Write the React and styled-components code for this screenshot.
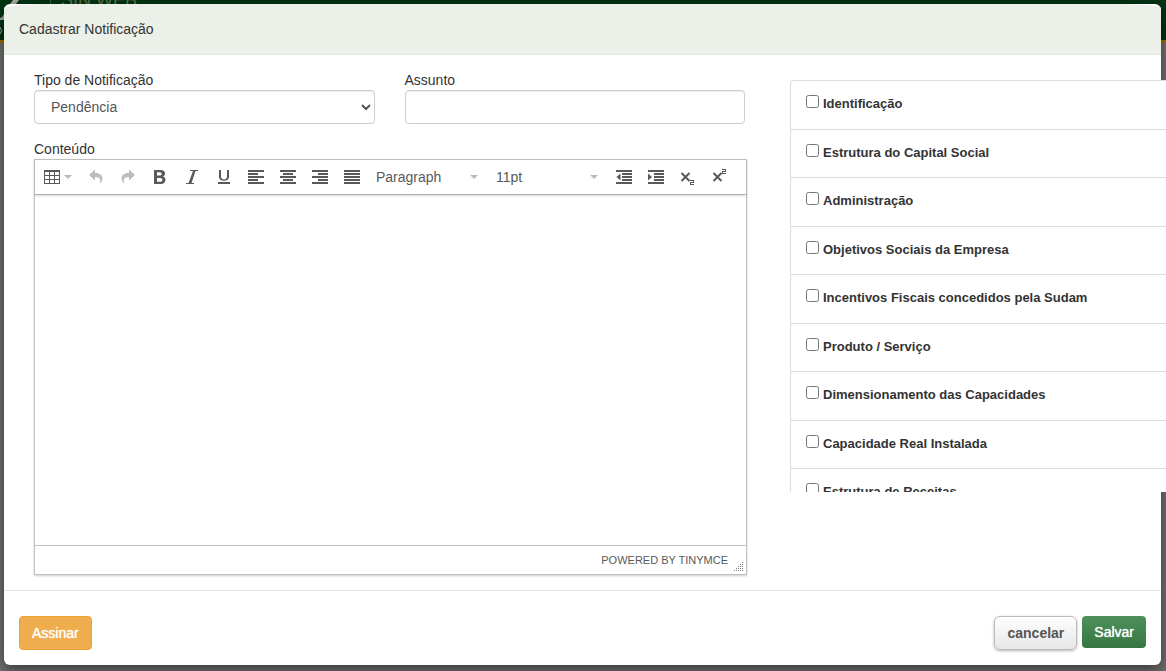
import React from "react";
import styled, { createGlobalStyle, css } from "styled-components";

const Global = createGlobalStyle`
  *, *::before, *::after { box-sizing: border-box; }
  html, body, #root { height: 100%; }
  body {
    margin: 0;
    overflow: hidden;
    background: #707070;
    color: #333;
    font: 14px/20px "Liberation Sans", Arial, sans-serif;
  }
  button, input, select { font: inherit; }
`;

const Page = styled.div`
  position: relative;
  height: 100%;
`;

const SiteHeader = styled.header`
  display: flex;
  height: 43px;
  overflow: hidden;
  background: #003413;
  border-bottom: 3px solid #a06c00;
`;

const SiteTitle = styled.span`
  margin: -9px 0 0 61px;
  color: #5d7548;
  font-size: 18px;
  line-height: 18px;
`;

const SiteLogo = styled.svg`
  position: absolute;
  left: 0;
  top: 0;
`;

const Modal = styled.form`
  position: absolute;
  inset: 4px 5px 6px 4px;
  display: flex;
  flex-direction: column;
  background: #fff;
  border-radius: 6px;
  box-shadow: 0 5px 15px rgba(0, 0, 0, 0.5);
`;

const ModalHeader = styled.div`
  padding: 15px;
  background: #ebf0e9;
  border-bottom: 1px solid #e5e5e5;
  border-radius: 50px 50px 0 0 / 4px 4px 0 0;
`;

const Title = styled.h4`
  margin: 0;
  font-size: 14px;
  font-weight: 400;
  line-height: 20px;
`;

const ModalBody = styled.div`
  flex: 1;
  display: grid;
  grid-template-columns: minmax(0, 1fr) 371px;
  column-gap: 45px;
  align-items: start;
  padding: 15px 0 0 30px;
`;

const Fields = styled.div`
  display: grid;
  grid-template-columns: 1fr 1fr;
  gap: 15px 30px;
`;

const Field = styled.div`
  display: flex;
  flex-direction: column;
  min-width: 0;
`;

const Label = styled.label`
  line-height: 20px;
`;

const control = css`
  width: 100%;
  height: 34px;
  color: #555;
  background: #fff;
  border: 1px solid #ccc;
  border-radius: 4px;
  box-shadow: inset 0 1px 1px rgba(0, 0, 0, 0.075);
`;

const Select = styled.select`
  ${control}
  padding: 6px 0 6px 12px;
`;

const TextInput = styled.input`
  ${control}
  padding: 6px 12px;
`;

const ContentField = styled(Field)`
  grid-column: 1 / -1;
  margin-right: -2px;
`;

const Editor = styled.div`
  border: 1px solid #c0c0c0;
  box-shadow: 0 1px 2px rgba(0, 0, 0, 0.2);
`;

const Toolbar = styled.div`
  display: flex;
  align-items: center;
  height: 35px;
  padding-left: 5px;
  border-bottom: 1px solid #b2b2b2;
  box-shadow: 0 1px 2px rgba(0, 0, 0, 0.15);
`;

const ToolButton = styled.button`
  display: flex;
  align-items: center;
  gap: 4px;
  width: ${(p) => p.$width || 32}px;
  height: 28px;
  padding: 0 4px;
  border: 0;
  background: none;
  color: #595959;
  opacity: ${(p) => (p.disabled ? 0.4 : 1)};
`;

const ListButton = styled(ToolButton)`
  width: 120px;
  padding-right: 14px;
`;

const ListLabel = styled.span`
  flex: 1;
  text-align: left;
`;

const Caret = styled.span`
  border: 4px solid transparent;
  border-top-color: #b5bcc2;
  border-bottom: 0;
`;

const EditArea = styled.div`
  height: 350px;
  outline: 0;
`;

const StatusBar = styled.div`
  display: flex;
  justify-content: flex-end;
  height: 29px;
  padding: 4px 2px 2px 0;
  border-top: 1px solid #c0c0c0;
  color: #595959;
  font-size: 11px;
`;

const Grip = styled.svg`
  align-self: flex-end;
  margin-left: 4px;
`;

const SectionScroll = styled.div`
  height: 412px;
  margin-top: 10px;
  margin-right: -5px;
  overflow: hidden;
  background: #fff;
  position: relative;
`;

const SectionList = styled.ul`
  display: grid;
  grid-auto-rows: 1fr;
  height: 437px;
  margin: 0;
  padding: 0;
  list-style: none;
  border-left: 1px solid #ddd;
  border-top-left-radius: 4px;
`;

const Section = styled.li`
  padding: 12px 15px;
  border-top: 1px solid #ddd;
  &:first-child { border-top-left-radius: 4px; }
`;

const SectionLabel = styled.label`
  display: flex;
  gap: 4px;
  font-size: 13px;
  font-weight: 700;
  line-height: 22px;
`;

const CheckBox = styled.input`
  width: 13px;
  height: 13px;
  margin: 2px 0 0;
`;

const ModalFooter = styled.div`
  display: flex;
  gap: 5px;
  padding: 25px 15px 15px;
  border-top: 1px solid #e5e5e5;
`;

const Button = styled.button`
  align-self: flex-start;
  height: 34px;
  padding: 0 12px;
  border: 1px solid transparent;
  border-radius: 4px;
`;

const SignButton = styled(Button)`
  margin-right: auto;
  color: #fff;
  background: #f0ad4e;
  border-color: #eea236;
  text-shadow: 0 0 1px #fff;
`;

const CancelButton = styled(Button)`
  color: #555;
  font-weight: 700;
  background: linear-gradient(#fff, #e6e6e6);
  border-color: #bbb;
  border-radius: 6px;
  box-shadow: 0 1px 3px rgba(0, 0, 0, 0.3);
`;

const SaveButton = styled(Button)`
  height: 32px;
  border: 0;
  color: #fff;
  background: linear-gradient(#4f915d, #357643);
  text-shadow: 0 0 1px #fff;
`;

const Icon = ({ children }) => (
  <svg width="16" height="16" viewBox="0 0 16 16" fill="currentColor" aria-hidden="true">
    {children}
  </svg>
);

const Lines = ({ d }) => (
  <Icon>
    <path d={d} shapeRendering="crispEdges" />
  </Icon>
);

const undoPath = "M7 0.500 1 6l6 5.500V8c4.500 0 6.500 2 4.500 7 5-4.500 3.500-11-4.500-11z";

const formats = [
  { label: "Negrito", icon: <Icon><path fillRule="evenodd" d="M2 1h6.500c3 0 4.500 1.500 4.500 3.500 0 1.500-.8 2.500-2 3 1.800.5 2.500 1.800 2.500 3.300 0 2.600-1.800 4.200-4.500 4.200H2zM5 3.200v3.400h2.800c2.500 0 2.500-3.400 0-3.400zM5 9v3.800h3.200c2.900 0 2.900-3.800 0-3.800z" /></Icon> },
  { label: "Itálico", icon: <Icon><path d="M6 1h8v1h-2.500L7.500 14H10v1H2v-1h2.500L9 2H6z" /></Icon> },
  { label: "Sublinhado", icon: <Icon><path d="M3 1h2v6.500c0 4 6 4 6 0V1h2v6.500C13 13.300 3 13.300 3 7.500zM2 13h12v2H2z" /></Icon> },
  { label: "Alinhar à esquerda", icon: <Lines d="M0 1h16v2H0zM0 4h10v2H0zM0 7h16v2H0zM0 10h10v2H0zM0 13h16v2H0z" /> },
  { label: "Centralizar", icon: <Lines d="M0 1h16v2H0zM3 4h10v2H3zM0 7h16v2H0zM3 10h10v2H3zM0 13h16v2H0z" /> },
  { label: "Alinhar à direita", icon: <Lines d="M0 1h16v2H0zM6 4h10v2H6zM0 7h16v2H0zM6 10h10v2H6zM0 13h16v2H0z" /> },
  { label: "Justificar", icon: <Lines d="M0 1h16v2H0zM0 4h16v2H0zM0 7h16v2H0zM0 10h16v2H0zM0 13h16v2H0z" /> },
];

const crossPath = "M1.500 4 9.500 12M9.500 4 1.500 12";
const twoPath = "M0 0h4v3H1v1h3v1H0V2h3V1H0z";
const Cross = () => <path d={crossPath} fill="none" stroke="currentColor" strokeWidth="2" />;

const indentLines = "M0 1h16v2H0zM6 4h10v2H6zM6 7h10v2H6zM6 10h10v2H6zM0 13h16v2H0z";

const indents = [
  { label: "Diminuir recuo", icon: <Icon><path shapeRendering="crispEdges" d={indentLines} /><path d="M4.500 4.500v7L0.500 8z" /></Icon> },
  { label: "Aumentar recuo", icon: <Icon><path shapeRendering="crispEdges" d={indentLines} /><path d="M0 4.500v7L4 8z" /></Icon> },
  { label: "Subscrito", icon: <Icon><Cross /><path d={twoPath} transform="translate(10 11)" /></Icon> },
  { label: "Sobrescrito", icon: <Icon><Cross /><path d={twoPath} transform="translate(10 0)" /></Icon> },
];

const sections = [
  "Identificação",
  "Estrutura do Capital Social",
  "Administração",
  "Objetivos Sociais da Empresa",
  "Incentivos Fiscais concedidos pela Sudam",
  "Produto / Serviço",
  "Dimensionamento das Capacidades",
  "Capacidade Real Instalada",
  "Estrutura de Receitas",
];

const Tools = ({ items }) =>
  items.map((t) => (
    <ToolButton key={t.label} type="button" aria-label={t.label}>
      {t.icon}
    </ToolButton>
  ));

export default function App() {
  return (
    <Page>
      <Global />
      <SiteHeader>
        <SiteLogo width="52" height="43" aria-hidden="true">
          <path d="M10 4 13 0h6l-3 4z" fill="#a3aaa5" />
          <path d="M0 18q3-1 4-4v6H0z" fill="#a3aaa5" />
          <path d="M0 27q3 4 0 7" fill="none" stroke="#a3aaa5" />
          <path d="M50.500 0v4" stroke="#435836" />
        </SiteLogo>
        <SiteTitle>SIN WEB</SiteTitle>
      </SiteHeader>
      <Modal>
        <ModalHeader>
          <Title>Cadastrar Notificação</Title>
        </ModalHeader>
        <ModalBody>
          <Fields>
            <Field>
              <Label htmlFor="tipo">Tipo de Notificação</Label>
              <Select id="tipo">
                <option>Pendência</option>
              </Select>
            </Field>
            <Field>
              <Label htmlFor="assunto">Assunto</Label>
              <TextInput id="assunto" type="text" />
            </Field>
            <ContentField>
              <Label id="conteudo">Conteúdo</Label>
              <Editor>
                <Toolbar>
                  <ToolButton type="button" aria-label="Tabela" $width={44}>
                    <Icon>
                      <path shapeRendering="crispEdges" fillRule="evenodd" d="M0 1h16v14H0zM1 3h4v3H1zM6 3h4v3H6zM11 3h4v3h-4zM1 7h4v3H1zM6 7h4v3H6zM11 7h4v3h-4zM1 11h4v3H1zM6 11h4v3H6zM11 11h4v3h-4z" />
                    </Icon>
                    <Caret />
                  </ToolButton>
                  <ToolButton type="button" aria-label="Desfazer" disabled>
                    <Icon><path d={undoPath} /></Icon>
                  </ToolButton>
                  <ToolButton type="button" aria-label="Refazer" disabled>
                    <Icon><path d={undoPath} transform="matrix(-1 0 0 1 16 0)" /></Icon>
                  </ToolButton>
                  <Tools items={formats} />
                  <ListButton type="button">
                    <ListLabel>Paragraph</ListLabel>
                    <Caret />
                  </ListButton>
                  <ListButton type="button">
                    <ListLabel>11pt</ListLabel>
                    <Caret />
                  </ListButton>
                  <Tools items={indents} />
                </Toolbar>
                <EditArea contentEditable role="textbox" aria-labelledby="conteudo" />
                <StatusBar>
                  POWERED BY TINYMCE
                  <Grip width="12" height="12" aria-hidden="true">
                    <path
                      shapeRendering="crispEdges"
                      stroke="#777"
                      strokeDasharray="1 1"
                      d="M10 2.500h2M8 4.500h4M6 6.500h6M4 8.500h8M2 10.500h10"
                    />
                  </Grip>
                </StatusBar>
              </Editor>
            </ContentField>
          </Fields>
          <SectionScroll>
            <SectionList>
              {sections.map((name) => (
                <Section key={name}>
                  <SectionLabel>
                    <CheckBox type="checkbox" />
                    {name}
                  </SectionLabel>
                </Section>
              ))}
            </SectionList>
          </SectionScroll>
        </ModalBody>
        <ModalFooter>
          <SignButton type="button">Assinar</SignButton>
          <CancelButton type="button">cancelar</CancelButton>
          <SaveButton type="submit">Salvar</SaveButton>
        </ModalFooter>
      </Modal>
    </Page>
  );
}
